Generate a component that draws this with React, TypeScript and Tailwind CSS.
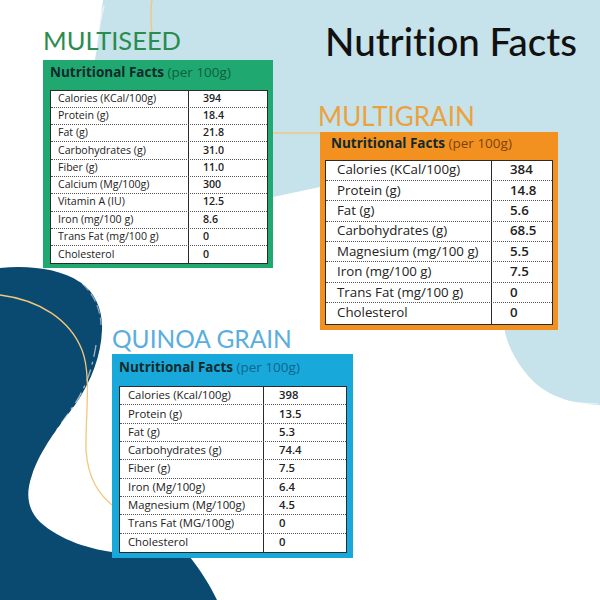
import React from "react";

type Row = [string, string];

interface CardProps {
  title: string;
  titleClass: string;
  cardClass: string;
  headerClass: string;
  perClass: string;
  tableClass: string;
  rowClass: string;
  labelClass: string;
  valueClass: string;
  rows: Row[];
}

const multiseed: Row[] = [
  ["Calories (KCal/100g)", "394"],
  ["Protein (g)", "18.4"],
  ["Fat (g)", "21.8"],
  ["Carbohydrates (g)", "31.0"],
  ["Fiber (g)", "11.0"],
  ["Calcium (Mg/100g)", "300"],
  ["Vitamin A (IU)", "12.5"],
  ["Iron (mg/100 g)", "8.6"],
  ["Trans Fat (mg/100 g)", "0"],
  ["Cholesterol", "0"],
];

const multigrain: Row[] = [
  ["Calories (KCal/100g)", "384"],
  ["Protein (g)", "14.8"],
  ["Fat (g)", "5.6"],
  ["Carbohydrates (g)", "68.5"],
  ["Magnesium (mg/100 g)", "5.5"],
  ["Iron (mg/100 g)", "7.5"],
  ["Trans Fat (mg/100 g)", "0"],
  ["Cholesterol", "0"],
];

const quinoa: Row[] = [
  ["Calories (Kcal/100g)", "398"],
  ["Protein (g)", "13.5"],
  ["Fat (g)", "5.3"],
  ["Carbohydrates (g)", "74.4"],
  ["Fiber (g)", "7.5"],
  ["Iron (Mg/100g)", "6.4"],
  ["Magnesium (Mg/100g)", "4.5"],
  ["Trans Fat (MG/100g)", "0"],
  ["Cholesterol", "0"],
];

function NutritionCard(p: CardProps) {
  return (
    <div>
      <h2 className={p.titleClass}>{p.title}</h2>
      <div className={p.cardClass}>
        <div className={p.headerClass}>
          <span className="font-bold text-[#10292a]">Nutritional Facts</span>{" "}
          <span className={p.perClass}>(per 100g)</span>
        </div>
        <div className={p.tableClass}>
          {p.rows.map(([label, value]) => (
            <div key={label} className={p.rowClass}>
              <div className={p.labelClass}>{label}</div>
              <div className={p.valueClass}>{value}</div>
            </div>
          ))}
        </div>
      </div>
    </div>
  );
}

function Backdrop() {
  return (
    <svg className="absolute inset-0" width="600" height="600" viewBox="0 0 600 600">
      {/* pale blue wash, top right */}
      <path
        d="M103 0 H600 V405 C565 404 540 392 525 372 C512 355 505 340 503 320 L400 200 L320 187 L273 197 L150 220 L95 60 Z"
        fill="#c6e2ea"
      />
      <path d="M104 6 C100 20 98 34 96 52" stroke="#ffffff" strokeOpacity="0.6" strokeWidth="1.5" fill="none" />
      <path d="M520 385 C540 398 565 403 598 404" stroke="#ffffff" strokeOpacity="0.7" strokeWidth="1.2" fill="none" />
      {/* navy brush blob, bottom left */}
      <path
        d="M0 268 C30 265 60 269 80 282 C95 292 103 310 102 330 C101 355 92 380 75 405 C60 425 40 450 32 475 C25 495 28 510 40 522 C60 540 90 550 120 553 L150 545 L190 557 C200 570 210 585 217 600 L0 600 Z"
        fill="#0b4a70"
      />
      <path d="M60 271 C85 279 100 300 101 325" stroke="#ffffff" strokeOpacity="0.55" strokeWidth="1.2" strokeDasharray="9 4" fill="none" />
      <path d="M96 345 C92 370 85 390 72 408 C58 428 42 450 35 472 C29 492 31 505 40 516" stroke="#ffffff" strokeOpacity="0.6" strokeWidth="1.3" strokeDasharray="12 5 3 5" fill="none" />
      {/* thin yellow threads */}
      <path d="M0 295 C40 300 70 320 82 350 C92 375 85 420 86 450 C88 480 100 495 112 505" stroke="#f2c77c" strokeWidth="1.3" fill="none" />
      <path d="M152 0 C150 12 151 24 152 34" stroke="#f2c77c" strokeWidth="1.3" fill="none" />
      <path d="M273 133 L320 133" stroke="#f2c77c" strokeWidth="1.5" fill="none" />
    </svg>
  );
}

export default function App() {
  return (
    <div className="relative h-[600px] w-[600px] overflow-hidden bg-white font-['Open_Sans','Lato',sans-serif] text-[#222] [font-variant-ligatures:none]">
      <Backdrop />
      <div className="relative flex flex-col pl-[43px]">
        <div className="flex">
          <div className="w-[230px] pt-[28px]">
            <NutritionCard
              title="MULTISEED"
              titleClass="mb-[6px] font-['Lato',sans-serif] text-[25.5px] leading-none font-normal text-[#2a8c4f]"
              cardClass="w-[230px] bg-[#1fa971] pl-[7px] pr-[5px] pb-[4px]"
              headerClass="h-[30px] pt-[4px] text-[13.5px] leading-[16px] whitespace-nowrap"
              perClass="text-[#0d5e3c]"
              tableClass="border border-[#2b2b2b] bg-white"
              rowClass="flex h-[17.3px] items-stretch border-b border-dotted border-[#555] text-[10.6px] last:border-b-0"
              labelClass="flex w-[138px] items-center whitespace-nowrap border-r border-[#2b2b2b] pl-[7px]"
              valueClass="flex items-center pl-[14px] font-semibold"
              rows={multiseed}
            />
          </div>
          <div className="ml-[47px] w-[238px] pt-[22px]">
            <h1 className="ml-[5px] whitespace-nowrap font-['Lato',sans-serif] text-[38.5px] leading-none font-medium text-[#111]">
              Nutrition Facts
            </h1>
            <div className="mt-[42px]">
              <NutritionCard
                title="MULTIGRAIN"
                titleClass="-ml-[2px] mb-[3px] font-['Lato',sans-serif] text-[26px] leading-none font-normal text-[#eba23e]"
                cardClass="w-[238px] bg-[#f39120] px-[5px] pb-[5px]"
                headerClass="h-[28px] pl-[6px] pt-[3px] text-[13.5px] leading-[16px] whitespace-nowrap"
                perClass="text-[#7a430f]"
                tableClass="border border-[#2b2b2b] bg-white"
                rowClass="flex h-[20.4px] items-stretch border-b border-dotted border-[#555] text-[13.3px] last:border-b-0"
                labelClass="flex w-[166px] items-center whitespace-nowrap border-r border-[#2b2b2b] pl-[11px]"
                valueClass="flex items-center pl-[18px] font-semibold"
                rows={multigrain}
              />
            </div>
          </div>
        </div>
        <div className="-mt-[3px] ml-[69px]">
          <NutritionCard
            title="QUINOA GRAIN"
            titleClass="mb-[3px] font-['Lato',sans-serif] text-[24.5px] leading-none font-normal text-[#5aaede]"
            cardClass="w-[241px] bg-[#19a8da] pl-[7px] pr-[6px] pb-[5px]"
            headerClass="h-[32px] pt-[5px] text-[13.5px] leading-[16px] whitespace-nowrap"
            perClass="text-[#0b6790]"
            tableClass="border border-[#2b2b2b] bg-white"
            rowClass="flex h-[18.3px] items-stretch border-b border-dotted border-[#555] text-[11.3px] last:border-b-0"
            labelClass="flex w-[144px] items-center whitespace-nowrap border-r border-[#2b2b2b] pl-[8px]"
            valueClass="flex items-center pl-[15px] font-semibold"
            rows={quinoa}
          />
        </div>
      </div>
    </div>
  );
}
